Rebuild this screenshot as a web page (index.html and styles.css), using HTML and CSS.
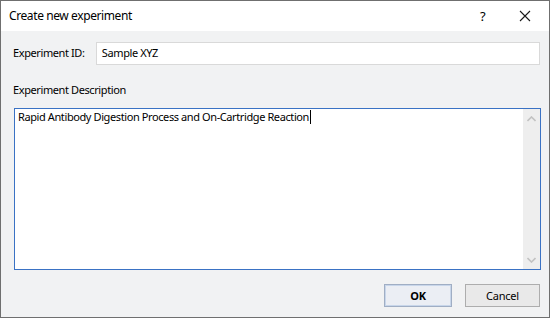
FILE: index.html
```html
<!DOCTYPE html>
<html lang="en">
<head>
  <meta charset="UTF-8">
  <title>Create new experiment</title>
  <link rel="stylesheet" href="styles.css">
</head>
<body>
  <div class="dialog">
    <div class="titlebar">
      <span class="title">Create new experiment</span>
      <span class="title-help">?</span>
      <span class="title-close">
        <svg width="12" height="12" viewBox="0 0 12 12">
          <path d="M1 1 L11 11 M11 1 L1 11" stroke="#1a1a1a" stroke-width="1.1" fill="none"/>
        </svg>
      </span>
    </div>

    <div class="content">
      <div class="id-row">
        <label class="id-label">Experiment ID:</label>
        <div class="text-input">Sample XYZ</div>
      </div>

      <div class="desc-label">Experiment Description</div>

      <div class="desc-box">
        <div class="desc-text">Rapid Antibody Digestion Process and On-Cartridge Reaction<span class="caret"></span></div>
        <div class="scrollbar">
          <svg width="9" height="6" viewBox="0 0 9 6">
            <path d="M0.5 5 L4.5 1 L8.5 5" stroke="#c2c2c2" stroke-width="1.6" fill="none"/>
          </svg>
          <svg width="9" height="6" viewBox="0 0 9 6">
            <path d="M0.5 1 L4.5 5 L8.5 1" stroke="#c2c2c2" stroke-width="1.6" fill="none"/>
          </svg>
        </div>
      </div>

      <div class="buttons">
        <button class="btn btn-default">OK</button>
        <button class="btn">Cancel</button>
      </div>
    </div>
  </div>
</body>
</html>
```

FILE: styles.css
```css
:root {
  --dialog-bg: #f1f2f3;
  --frame: #6f6f6f;
  --text: #000000;
  --input-border: #d9d9d9;
  --focus-border: #3a72c4;
}

* {
  box-sizing: border-box;
  margin: 0;
  padding: 0;
}

body {
  background: #ffffff;
  font-family: "Noto Sans", "Open Sans", sans-serif;
  font-size: 11px;
  letter-spacing: -0.4px;
  color: var(--text);
}

.dialog {
  width: 550px;
  height: 318px;
  border: 1px solid var(--frame);
  background: var(--dialog-bg);
  display: flex;
  flex-direction: column;
}

.titlebar {
  height: 30px;
  background: #ffffff;
  display: flex;
  align-items: center;
  padding-left: 8px;
}

.title {
  flex: 1;
  font-size: 12px;
  letter-spacing: -0.4px;
  padding-bottom: 1px;
}

.title-help {
  width: 46px;
  text-align: center;
  font-size: 13px;
  padding-left: 5px;
}

.title-close {
  width: 46px;
  display: flex;
  justify-content: center;
  padding-right: 2px;
}

.content {
  flex: 1;
  padding: 11px 9px 0 12px;
  display: flex;
  flex-direction: column;
}

.id-row {
  display: flex;
  align-items: center;
  height: 23px;
}

.id-label {
  width: 83px;
  white-space: nowrap;
  padding-bottom: 2px;
}

.text-input {
  width: 445px;
  height: 23px;
  background: #ffffff;
  border: 1px solid var(--input-border);
  padding: 1px 5px;
  line-height: 17px;
}

.desc-label {
  margin-top: 16px;
  height: 18px;
  line-height: 18px;
}

.desc-box {
  margin-top: 9px;
  margin-left: 1px;
  width: 527px;
  height: 162px;
  background: #ffffff;
  border: 1px solid var(--focus-border);
  display: flex;
}

.desc-text {
  flex: 1;
  padding: 0 3px;
  line-height: 16px;
}

.caret {
  display: inline-block;
  width: 1px;
  height: 14px;
  background: #000000;
  vertical-align: -3px;
  margin-left: 1px;
}

.scrollbar {
  width: 17px;
  background: #eeeeee;
  display: flex;
  flex-direction: column;
  justify-content: space-between;
  align-items: center;
  padding: 7px 0 6px;
}

.buttons {
  display: flex;
  justify-content: flex-end;
  gap: 13px;
  margin-top: 14px;
}

.btn {
  height: 23px;
  width: 75px;
  font-family: inherit;
  font-size: 11px;
  letter-spacing: -0.2px;
  background: #e9e9e9;
  border: 1px solid #adadad;
  color: var(--text);
}

.btn-default {
  width: 68px;
  font-weight: 700;
  background: #ebeef4;
  border: 1px solid #a0aec4;
  box-shadow: inset 0 0 0 1px #c8d6ea;
}
```
